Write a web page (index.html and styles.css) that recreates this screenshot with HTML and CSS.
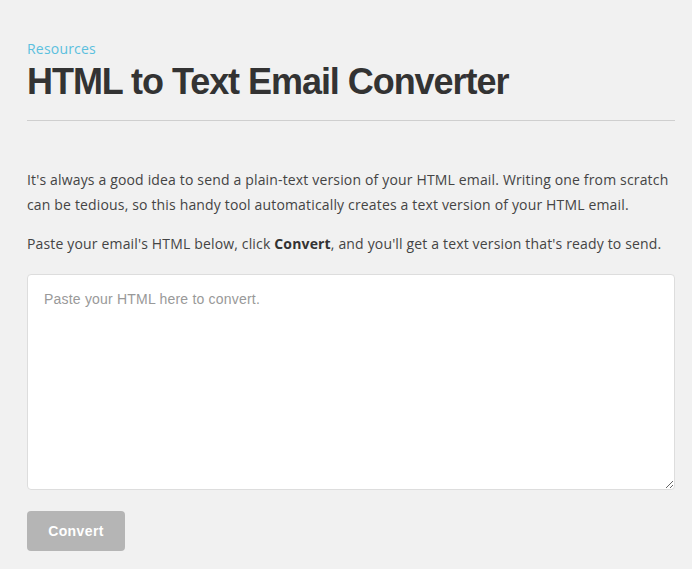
FILE: index.html
```html
<!DOCTYPE html>
<html lang="en">
<head>
    <meta charset="UTF-8">
    <title>HTML to Text Email Converter</title>
    <link rel="stylesheet" href="styles.css">
</head>
<body>
    <div class="container">
        <header class="page-header">
            <a class="crumb" href="#">Resources</a>
            <h1>HTML to Text Email Converter</h1>
        </header>
        <div class="intro">
            <p>It's always a good idea to send a plain-text version of your HTML email. Writing one from scratch can be tedious, so this handy tool automatically creates a text version of your HTML email.</p>
            <p>Paste your email's HTML below, click <strong>Convert</strong>, and you'll get a text version that's ready to send.</p>
        </div>
        <form class="converter" onsubmit="return false;">
            <textarea class="html-input" placeholder="Paste your HTML here to convert."></textarea>
            <button type="submit" class="convert-btn" disabled>Convert</button>
        </form>
    </div>
</body>
</html>
```
FILE: styles.css
```css
body {
    margin: 0;
    padding: 0;
    background: #f1f1f1;
    font-family: 'Open Sans', sans-serif;
    color: #444;
}
.container {
    width: 648px;
    margin-left: 27px;
    padding-top: 39px;
}
.page-header {
    border-bottom: 1px solid #cfcfcf;
    padding-bottom: 17px;
}
.crumb {
    display: block;
    font-size: 14px;
    line-height: 20px;
    letter-spacing: 0.2px;
    color: #5bc0de;
    text-decoration: none;
}
h1 {
    margin: 2px 0 0;
    font-family: 'Liberation Sans', Arial, sans-serif;
    font-size: 36px;
    line-height: 42px;
    font-weight: bold;
    letter-spacing: -1.05px;
    color: #333;
}
.intro {
    padding-top: 46px;
}
.intro p {
    margin: 0 0 14px;
    font-size: 14px;
    line-height: 25px;
    letter-spacing: 0.16px;
}
.intro strong {
    color: #333;
}
.converter {
    display: flex;
    flex-direction: column;
    align-items: flex-start;
    gap: 21px;
    padding-top: 4px;
}
.html-input {
    box-sizing: border-box;
    width: 100%;
    height: 216px;
    padding: 14px 16px;
    border: 1px solid #ddd;
    border-radius: 4px;
    background: #fff;
    font-family: 'Liberation Sans', Arial, sans-serif;
    font-size: 14px;
    line-height: 20px;
    letter-spacing: 0.2px;
    color: #333;
}
.html-input::placeholder {
    color: #999;
}
.convert-btn {
    width: 98px;
    height: 40px;
    border: none;
    border-radius: 4px;
    background: #b5b5b5;
    color: #fff;
    font-family: 'Liberation Sans', Arial, sans-serif;
    font-size: 14px;
    font-weight: bold;
    letter-spacing: 0.4px;
}
```
